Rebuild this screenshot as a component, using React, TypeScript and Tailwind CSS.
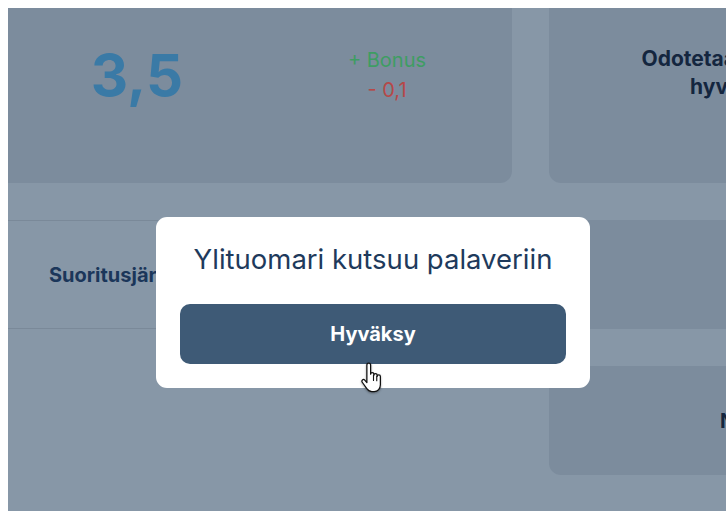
const FONT = { fontFamily: 'Inter, "Noto Sans", sans-serif' };

// Pointer cursor resting on the confirm button
function HandCursor() {
    return (
        <svg width="25" height="33" viewBox="0 0 20 26" className="drop-shadow-[0_1px_1px_rgba(0,0,0,0.35)]">
            <path
                d="M5.5 2.2a1.5 1.5 0 0 1 3 0V9.5a1.3 1.3 0 0 1 2.6 0v0.8a1.3 1.3 0 0 1 2.6 0v1a1.3 1.3 0 0 1 2.6 0V18c0 3-2 5.5-5 5.5H9.5c-2 0-3-1-4.2-2.6L1.8 16a1.3 1.3 0 0 1 2-1.7l1.7 2V2.2z"
                fill="#fff"
                stroke="#111"
                strokeWidth="1"
                strokeLinejoin="round"
            />
            <path d="M10.8 10.3v4.2M13.4 11.3v3.4" stroke="#111" strokeWidth="0.9" strokeLinecap="round" />
        </svg>
    );
}

export default function App() {
    return (
        <div className="w-[726px] h-[511px] bg-white pl-2 pt-2 overflow-hidden" style={FONT}>
            <div className="relative w-full h-full bg-[#8797a7] overflow-hidden">
                {/* Dashboard grid, dimmed behind the dialog */}
                <div className="grid grid-cols-[516px_422px] grid-rows-[195px_109px_109px] gap-x-[37px] gap-y-[37px] -ml-3 -mt-5">
                    {/* Score card */}
                    <div className="bg-[#7c8c9d] rounded-xl pl-3 flex">
                        <div className="flex-1 flex justify-center pt-[58px] pl-1">
                            <span className="text-[58px] leading-none font-bold text-[#3a7aa6]">3,5</span>
                        </div>
                        <div className="flex-1 flex flex-col items-center pt-[57px] text-[20px] leading-[30px]">
                            <span className="text-[#3e9d63]">+ Bonus</span>
                            <span className="text-[#b64848]">- 0,1</span>
                        </div>
                    </div>

                    {/* Status card */}
                    <div className="bg-[#7c8c9d] rounded-xl pt-[57px] pr-2 text-center text-[21px] leading-7 font-bold text-[#14263f]">
                        Odotetaan ylituomarin
                        <br />
                        hyväksyntää
                    </div>

                    {/* Order row */}
                    <div className="border-y border-[#7a8999] flex items-center pl-[53px]">
                        <span className="text-[20px] font-bold text-[#1b365a]">Suoritusjärjestys</span>
                    </div>
                    <div className="bg-[#7c8c9d] rounded-xl" />

                    <div />
                    <div className="bg-[#7c8c9d] rounded-xl flex items-center pl-[171px]">
                        <span className="text-[20px] font-bold text-[#14263f]">Nollaa</span>
                    </div>
                </div>

                {/* Dialog */}
                <div className="absolute left-[148px] top-[209px] w-[434px] bg-white rounded-[11px] p-6 flex flex-col items-center">
                    <h2 className="text-[27.5px] leading-9 text-[#1e3a5c]">Ylituomari kutsuu palaveriin</h2>
                    <button className="mt-[27px] w-full h-[60px] rounded-[10px] bg-[#3e5a76] text-white text-[20px] font-bold">
                        Hyväksy
                    </button>
                </div>

                <div className="absolute left-[352px] top-[354px]">
                    <HandCursor />
                </div>
            </div>
        </div>
    );
}
